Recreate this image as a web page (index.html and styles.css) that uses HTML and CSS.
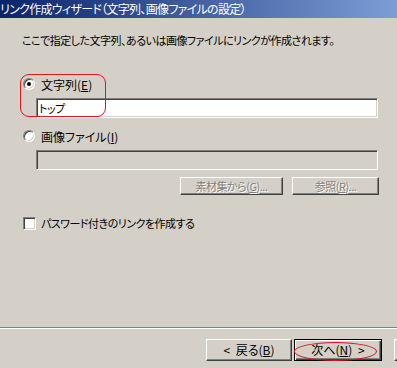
FILE: index.html
```html
<!DOCTYPE html>
<html>
<head>
	<meta charset="UTF-8">
	<title>リンク作成ウィザード</title>
	<link rel="stylesheet" href="styles.css">
</head>
<body>
	<div class="wiz">
		<div class="wiz-title">リンク作成ウィザード（文字列、画像ファイルの設定）</div>
		<p class="wiz-desc">ここで指定した文字列、あるいは画像ファイルにリンクが作成されます。</p>

		<div class="wiz-opt">
			<span class="wiz-radio on"></span><span>文字列(<u>E</u>)</span>
		</div>
		<div class="wiz-field">トップ</div>

		<div class="wiz-opt wiz-opt2">
			<span class="wiz-radio"></span><span>画像ファイル(<u>I</u>)</span>
		</div>
		<div class="wiz-field off"></div>
		<div class="wiz-btns">
			<a href="javascript:;" class="wiz-btn off btn-lib">素材集から(<u>G</u>)...</a>
			<a href="javascript:;" class="wiz-btn off btn-ref">参照(<u>R</u>)...</a>
		</div>

		<div class="wiz-check">
			<span class="wiz-box"></span><span>パスワード付きのリンクを作成する</span>
		</div>

		<div class="wiz-foot">
			<a href="javascript:;" class="wiz-btn btn-back">&lt; 戻る(<u>B</u>)</a>
			<a href="javascript:;" class="wiz-btn def btn-next">次へ(<u>N</u>) &gt;</a>
			<a href="javascript:;" class="wiz-btn btn-cancel"></a>
		</div>

		<!-- 赤い注記 -->
		<span class="mark-rect"></span>
		<span class="mark-oval"></span>
	</div>
</body>
</html>
```

FILE: styles.css
```css
*{
	margin:0px;padding:0px;
}
html,body{
	height:100%;overflow:hidden;
}
body{
	background:#d4d0c8;color:#000;font-size:11px;letter-spacing:-0.5px;
	font-family:"Noto Sans CJK JP","Noto Sans",sans-serif;font-feature-settings:"palt";
}
.wiz{
	position:relative;height:368px;display:flex;flex-direction:column;
}
.wiz-title{
	height:18px;line-height:18px;color:#fff;white-space:nowrap;font-size:12px;letter-spacing:-0.7px;
	background:linear-gradient(to right,#0a246a,#7c9dd6);
}
.wiz-desc{
	margin:15px 0 0 22px;line-height:14px;height:14px;white-space:nowrap;
}
.wiz-opt{
	display:flex;align-items:center;height:14px;margin:30px 0 0 23px;
	font-size:12px;letter-spacing:0;
}
.wiz-opt2{
	margin-top:11px;
}
.wiz-radio{
	position:relative;width:12px;height:12px;box-sizing:border-box;margin-right:6px;
	border:1px solid;border-color:#808080 #fff #fff #808080;border-radius:50%;
	background:#fff;box-shadow:inset 1px 1px #404040,inset -1px -1px #d4d0c8;
}
.wiz-radio.on:after{
	content:"";position:absolute;left:3px;top:3px;width:4px;height:4px;
	border-radius:50%;background:#000;
}
.wiz-field{
	height:20px;margin:7px 19px 0 36px;box-sizing:border-box;padding:0 2px;line-height:18px;
	border:1px solid;border-color:#808080 #fff #fff #808080;
	background:#fff;box-shadow:inset 1px 1px #404040,inset -1px -1px #d4d0c8;
}
.wiz-field.off{
	background:#d4d0c8;
}
.wiz-btns{
	display:flex;justify-content:flex-end;gap:9px;margin:7px 18px 0 0;
}
.wiz-btn{
	display:block;height:18px;box-sizing:border-box;line-height:16px;text-align:center;
	color:#000;text-decoration:none;white-space:pre;background:#d4d0c8;
	border:1px solid;border-color:#fff #404040 #404040 #fff;box-shadow:inset -1px -1px #808080;
}
.wiz-btn.off{
	color:#808080;text-shadow:1px 1px #fff;
}
.btn-lib{
	width:103px;
}
.btn-ref{
	width:87px;
}
.wiz-check{
	display:flex;align-items:center;height:14px;margin:21px 0 0 23px;
}
.wiz-box{
	width:13px;height:13px;box-sizing:border-box;margin-right:5px;
	border:1px solid;border-color:#808080 #fff #fff #808080;
	background:#fff;box-shadow:inset 1px 1px #404040,inset -1px -1px #d4d0c8;
}
.wiz-foot{
	margin-top:auto;height:41px;box-sizing:border-box;padding:11px 0 0 206px;
	display:flex;align-items:flex-start;
	border-top:1px solid #808080;box-shadow:inset 0 1px #fff;
}
.wiz-foot .wiz-btn{
	height:22px;line-height:20px;flex-shrink:0;font-size:12px;letter-spacing:0;word-spacing:3px;
}
.btn-back{
	width:86px;
}
.wiz-foot .btn-next{
	width:88px;margin-left:2px;border:1px solid #000;
	box-shadow:inset 1px 1px #fff,inset -1px -1px #404040,inset -2px -2px #808080;
}
.btn-cancel{
	width:86px;margin-left:12px;
}
.mark-rect{
	position:absolute;left:20px;top:74px;width:86px;height:43px;box-sizing:border-box;
	border:1px solid #e0141e;border-radius:9px;
}
.mark-oval{
	position:absolute;left:294px;top:342px;width:83px;height:19px;box-sizing:border-box;
	border:1px solid #e0141e;border-radius:50%;
}
```
